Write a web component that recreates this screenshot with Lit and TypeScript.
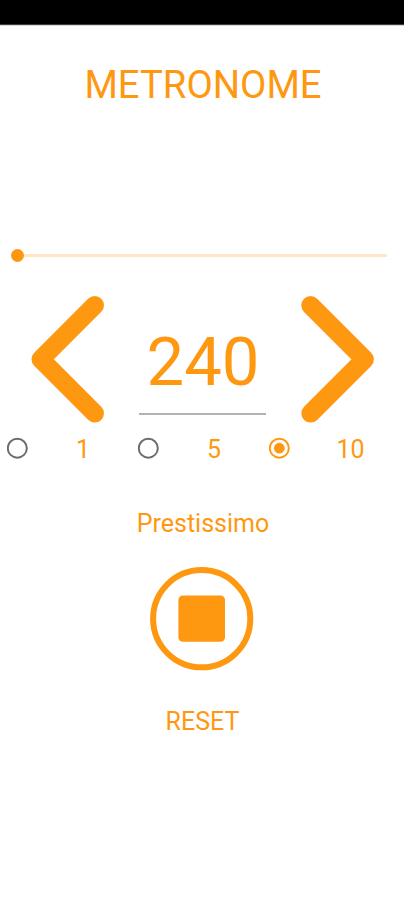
import { LitElement, html, css } from "lit";
import { customElement, state } from "lit/decorators.js";

@customElement("app-root")
export class AppRoot extends LitElement {
  static styles = css`
    :host { display: block; height: 900px; overflow: hidden; background: #fff; color: #ff9811; font-family: Roboto, "Liberation Sans", sans-serif; }
    * { box-sizing: border-box; }
    button { display: block; padding: 0; border: 0; background: none; color: inherit; font: inherit; }
    svg { display: block; flex: none; }
    .page { display: flex; flex-direction: column; align-items: center; }
    .status { width: 100%; height: 25px; background: #000; border-bottom: 1px solid #3c3c3c; box-shadow: 0 1px 0 #d8d8d8; }
    h1 { margin: 37px 0 0; padding-left: 2px; font-size: 38.3px; line-height: 46px; font-weight: 400; }
    .slider { width: 376px; height: 14px; margin: 140px 7px 0 0; display: flex; align-items: center; }
    .thumb { width: 13px; height: 13px; border-radius: 50%; background: #ff9811; }
    .track { flex: 1; height: 3px; background: #ffe7c6; }
    .tempo { width: 404px; height: 135px; margin-top: 30px; display: grid; grid-template-columns: 139px 127px 138px; }
    .value { height: 123px; padding: 30px 0 0 1px; border-bottom: 2px solid #b2b2b2; text-align: center; font-size: 67px; line-height: 80px; }
    .steps { width: 404px; height: 34px; margin-top: 4px; display: flex; padding-left: 7px; }
    .step { flex: none; width: 131px; display: flex; align-items: center; font-size: 25px; line-height: 30px; }
    .step:last-child { width: 142px; }
    .step .text { flex: 1; padding-top: 3px; text-align: center; }
    .mark { fill: none; stroke: #6c6c6c; stroke-width: 2; }
    .on .mark { stroke: #ff9811; }
    .dot { fill: #ff9811; }
    .step .dot { visibility: hidden; }
    .on .dot { visibility: visible; }
    .name { margin: 44px 0 0 2px; font-size: 25px; line-height: 30px; }
    .stop { margin-top: 28px; }
    .reset { margin: 36px 0 0 1px; font-size: 25px; line-height: 30px; }
    .line { fill: none; stroke: #ff9811; stroke-width: 18.6; stroke-linecap: round; stroke-linejoin: round; }
    .ring { fill: none; stroke: #ff9811; stroke-width: 6; }
  `;

  @state() private bpm = 240;
  @state() private step = 10;

  render() {
    return html`<div class="page">
      <div class="status"></div>
      <h1>METRONOME</h1>
      <div class="slider"><div class="thumb"></div><div class="track"></div></div>
      <div class="tempo">
        <button aria-label="Slower" @click=${() => (this.bpm -= this.step)}>
          <svg width="139" height="135"><path class="line" d="M94.7 13.3 L40.8 67.3 L94.7 121.3" /></svg>
        </button>
        <div class="value">${this.bpm}</div>
        <button aria-label="Faster" @click=${() => (this.bpm += this.step)}>
          <svg width="138" height="135"><path class="line" d="M44.6 13.3 L98.6 67.3 L44.6 121.3" /></svg>
        </button>
      </div>
      <div class="steps">
        ${[1, 5, 10].map(
          (n) => html`<button class="step ${n === this.step ? "on" : ""}" @click=${() => (this.step = n)}>
            <svg width="21" height="22">
              <circle class="mark" cx="10.3" cy="11.2" r="9.5" />
              <circle class="dot" cx="10.3" cy="11.2" r="5.4" />
            </svg>
            <span class="text">${n}</span>
          </button>`
        )}
      </div>
      <div class="name">Prestissimo</div>
      <button class="stop" aria-label="Stop">
        <svg width="104" height="104">
          <circle class="ring" cx="51.7" cy="51.7" r="48.6" />
          <rect class="dot" x="28.4" y="28.4" width="46.6" height="46.4" rx="4.5" />
        </svg>
      </button>
      <button class="reset">RESET</button>
    </div>`;
  }
}
